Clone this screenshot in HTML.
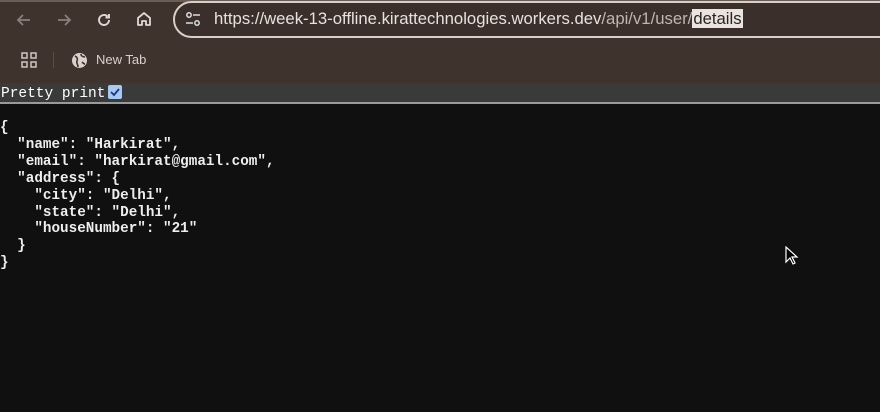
<!DOCTYPE html>
<html><head><style>
*{margin:0;padding:0;box-sizing:border-box}
body{width:880px;height:412px;overflow:hidden;background:#101010;font-family:"Liberation Sans",sans-serif;position:relative}
.top{position:absolute;left:0;top:0;width:880px;height:83px;background:#3f332e;border-top:2px solid #6a5d57}
.url{position:absolute;left:173px;top:1px;width:740px;height:37px;border:2px solid #d9cfc9;border-radius:19px;background:#3a2f2b}
.urltext{position:absolute;left:214px;top:9px;color:#e8e2de;font-size:16.7px;white-space:nowrap}
.urltext .d{color:#bfb6b1}
.urltext .sel{background:#e9e4e0;color:#2c2320;padding:0 1px}
.pp{position:absolute;left:0;top:83px;width:880px;height:21px;background:#3a3a3a;border-bottom:2px solid #9a9a9a;font-family:"Liberation Mono",monospace;color:#fff;font-size:14.5px;line-height:22px;padding-left:1px}
.cb{display:inline-block;width:14px;height:14px;background:#a8c8f4;border-radius:2px;vertical-align:-2px;margin-left:3px;position:relative}
pre{position:absolute;left:0;top:120px;font-family:"Liberation Mono",monospace;font-size:14.3px;line-height:16.9px;color:#eee;font-weight:bold}
.ico{position:absolute;color:#cfc6c1}
</style></head><body>
<div class="top"></div>
<svg class="ico" style="left:14px;top:10px" width="20" height="20" viewBox="0 0 20 20"><path d="M16 10H4M9 5l-5 5 5 5" stroke="#8a7f7a" stroke-width="1.8" fill="none"/></svg>
<svg class="ico" style="left:54px;top:10px" width="20" height="20" viewBox="0 0 20 20"><path d="M4 10h12M11 5l5 5-5 5" stroke="#8a7f7a" stroke-width="1.8" fill="none"/></svg>
<svg class="ico" style="left:94px;top:10px" width="20" height="20" viewBox="0 0 20 20"><path d="M15 10a5 5 0 1 1-1.5-3.6M15 4v3.5h-3.5" stroke="#e0d8d4" stroke-width="1.9" fill="none"/></svg>
<svg class="ico" style="left:134px;top:9px" width="20" height="20" viewBox="0 0 20 20"><path d="M4 9l6-5 6 5v7h-4v-4h-4v4H4z" stroke="#e0d8d4" stroke-width="1.8" fill="none" stroke-linejoin="round"/></svg>
<div class="url"></div>
<svg class="ico" style="left:184px;top:11px" width="18" height="16" viewBox="0 0 18 16"><circle cx="5" cy="4" r="2.2" stroke="#ddd" stroke-width="1.5" fill="none"/><path d="M9 4h7M2 12h7" stroke="#ddd" stroke-width="1.5"/><circle cx="13" cy="12" r="2.2" stroke="#ddd" stroke-width="1.5" fill="none"/></svg>
<div class="urltext">https://week-13-offline.kirattechnologies.workers.dev<span class="d">/api/v1/user/</span><span class="sel">details</span></div>
<svg class="ico" style="left:21px;top:52px" width="16" height="16" viewBox="0 0 16 16"><g stroke="#cfc6c1" stroke-width="1.5" fill="none"><rect x="1" y="1" width="5" height="5"/><rect x="10" y="1" width="5" height="5"/><rect x="1" y="10" width="5" height="5"/><rect x="10" y="10" width="5" height="5"/></g></svg>
<div style="position:absolute;left:53px;top:52px;width:1px;height:16px;background:#5a4e49"></div>
<svg class="ico" style="left:71px;top:52px" width="17" height="17" viewBox="0 0 17 17"><circle cx="8.5" cy="8.5" r="7.5" fill="#d9d1cc"/><path d="M4 4c2 1 3 3 2 5s1 3 1 6M10 2c0 2 2 3 4 3M11 10c1 1 2 2 3 2" stroke="#3f332e" stroke-width="1.6" fill="none"/></svg>
<div style="position:absolute;left:96px;top:52px;color:#d9d1cc;font-size:13px">New Tab</div>
<div class="pp">Pretty print<span class="cb"><svg width="14" height="14" viewBox="0 0 14 14" style="position:absolute;left:0;top:0"><path d="M3 7l3 3 5-6" stroke="#1a3a7a" stroke-width="1.8" fill="none"/></svg></span></div>
<pre>{
  "name": "Harkirat",
  "email": "harkirat@gmail.com",
  "address": {
    "city": "Delhi",
    "state": "Delhi",
    "houseNumber": "21"
  }
}</pre>
<svg style="position:absolute;left:785px;top:246px" width="14" height="20" viewBox="0 0 14 20"><path d="M1 1v15l4-4 3 6 2-1-3-6h5z" fill="#000" stroke="#fff" stroke-width="1.2"/></svg>
</body></html>
